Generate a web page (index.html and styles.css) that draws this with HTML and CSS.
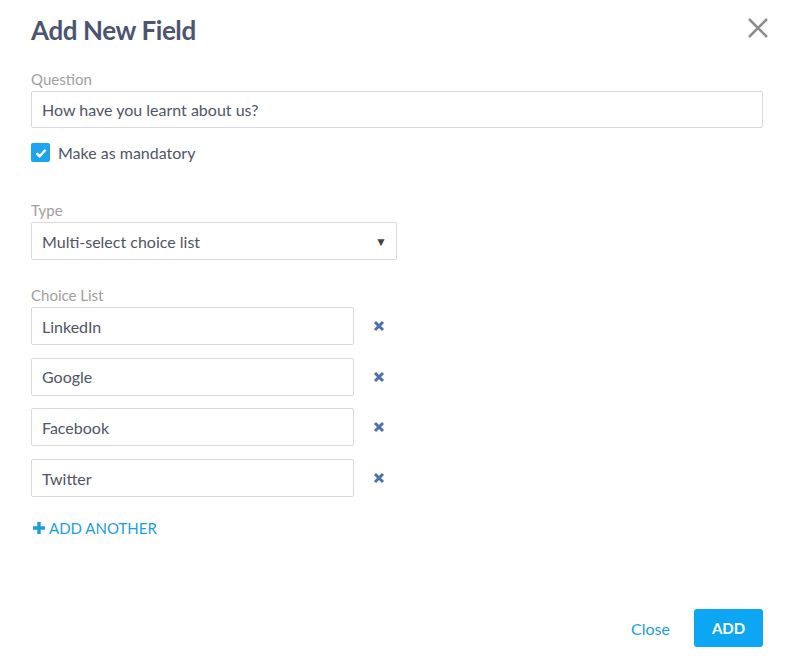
FILE: index.html
```html
<!DOCTYPE html>
<html lang="en">

<head>
    <meta charset="UTF-8">
    <meta name="viewport" content="width=device-width, initial-scale=1.0">
    <title>Add New Field</title>
    <link rel="stylesheet" href="styles.css">
</head>

<body>
    <div class="dialog">
        <div class="header">
            <div class="title">Add New Field</div>
            <button class="close-x" aria-label="Close">
                <svg width="22" height="22" viewBox="0 0 22 22">
                    <path d="M2 2 L20 20 M20 2 L2 20" stroke="#8c8c8c" stroke-width="2.5" fill="none" />
                </svg>
            </button>
        </div>

        <div class="label label-question">Question</div>
        <input class="text-input" type="text" value="How have you learnt about us?">

        <label class="check-row">
            <span class="checkbox">
                <svg width="14" height="14" viewBox="0 0 14 14">
                    <path d="M2.5 7.2 L5.6 10.2 L11.6 3.8" stroke="#fff" stroke-width="2.4" fill="none" />
                </svg>
            </span>
            Make as mandatory
        </label>

        <div class="label label-type">Type</div>
        <div class="select">
            <span>Multi-select choice list</span>
            <span class="arrow">&#9660;</span>
        </div>

        <div class="label label-choice">Choice List</div>
        <div class="choices">
            <div class="choice">
                <input class="text-input choice-input" type="text" value="LinkedIn">
                <span class="remove">
                    <svg width="12" height="12" viewBox="0 0 12 12">
                        <path d="M2 2 L10 10 M10 2 L2 10" stroke="#4a72b0" stroke-width="3" fill="none" />
                    </svg>
                </span>
            </div>
            <div class="choice">
                <input class="text-input choice-input" type="text" value="Google">
                <span class="remove">
                    <svg width="12" height="12" viewBox="0 0 12 12">
                        <path d="M2 2 L10 10 M10 2 L2 10" stroke="#4a72b0" stroke-width="3" fill="none" />
                    </svg>
                </span>
            </div>
            <div class="choice">
                <input class="text-input choice-input" type="text" value="Facebook">
                <span class="remove">
                    <svg width="12" height="12" viewBox="0 0 12 12">
                        <path d="M2 2 L10 10 M10 2 L2 10" stroke="#4a72b0" stroke-width="3" fill="none" />
                    </svg>
                </span>
            </div>
            <div class="choice">
                <input class="text-input choice-input" type="text" value="Twitter">
                <span class="remove">
                    <svg width="12" height="12" viewBox="0 0 12 12">
                        <path d="M2 2 L10 10 M10 2 L2 10" stroke="#4a72b0" stroke-width="3" fill="none" />
                    </svg>
                </span>
            </div>
        </div>

        <a class="add-another" href="#">
            <svg width="14" height="14" viewBox="0 0 14 14">
                <path d="M7 1 V13 M1 7 H13" stroke="#1b9ee0" stroke-width="3.4" fill="none" />
            </svg>
            ADD ANOTHER
        </a>

        <div class="footer">
            <a class="close-link" href="#">Close</a>
            <button class="add-btn">ADD</button>
        </div>
    </div>
</body>

</html>
```

FILE: styles.css
```css
* {
    box-sizing: border-box;
}

body {
    margin: 0;
    background-color: #fff;
    font-family: Lato, 'Open Sans', sans-serif;
    color: #4f5567;
}

.dialog {
    width: 792px;
    height: 670px;
    padding: 0 29px 0 31px;
}

.header {
    height: 59px;
    display: flex;
    justify-content: space-between;
    align-items: center;
}

.title {
    font-size: 26px;
    font-weight: bold;
    color: #4b5570;
    letter-spacing: -0.4px;
}

.close-x {
    border: none;
    background: none;
    padding: 0;
    margin-right: -6px;
    margin-top: -1px;
    cursor: pointer;
}

.label {
    font-size: 15px;
    line-height: 20px;
    color: #a0a0a0;
    margin-bottom: 2px;
}

.label-question {
    margin-top: 10px;
}

.text-input {
    display: block;
    width: 100%;
    height: 37px;
    border: 1px solid #d9d9d9;
    border-radius: 2px;
    padding: 0 10px;
    font-family: inherit;
    font-size: 16px;
    color: #4f5567;
    outline: none;
}

.check-row {
    display: flex;
    align-items: center;
    gap: 8px;
    margin-top: 15px;
    font-size: 16px;
    color: #4f5567;
    cursor: pointer;
}

.checkbox {
    width: 19px;
    height: 19px;
    border-radius: 2px;
    background-color: #1ca5ec;
    display: flex;
    justify-content: center;
    align-items: center;
}

.label-type {
    margin-top: 38px;
}

.select {
    width: 366px;
    height: 38px;
    border: 1px solid #d9d9d9;
    border-radius: 2px;
    padding: 0 9px 0 10px;
    display: flex;
    justify-content: space-between;
    align-items: center;
    font-size: 16px;
}

.arrow {
    font-size: 12px;
    color: #444;
}

.label-choice {
    margin-top: 25px;
}

.choices {
    display: flex;
    flex-direction: column;
    gap: 12.7px;
}

.choice {
    display: flex;
    align-items: center;
}

.choice-input {
    width: 323px;
    height: 38px;
}

.remove {
    margin-left: 19px;
    display: flex;
    cursor: pointer;
}

.add-another {
    display: inline-flex;
    align-items: center;
    gap: 3px;
    margin-top: 22px;
    margin-left: 1px;
    font-size: 15px;
    color: #1b9ee0;
    text-decoration: none;
}

.footer {
    display: flex;
    justify-content: flex-end;
    align-items: center;
    gap: 24px;
    margin-top: 71px;
}

.close-link {
    font-size: 16px;
    color: #1b9ee0;
    text-decoration: none;
}

.add-btn {
    width: 69px;
    height: 38px;
    border: none;
    border-radius: 3px;
    background-color: #0ca6f2;
    color: #fff;
    font-family: inherit;
    font-size: 15px;
    font-weight: bold;
    cursor: pointer;
}
```
